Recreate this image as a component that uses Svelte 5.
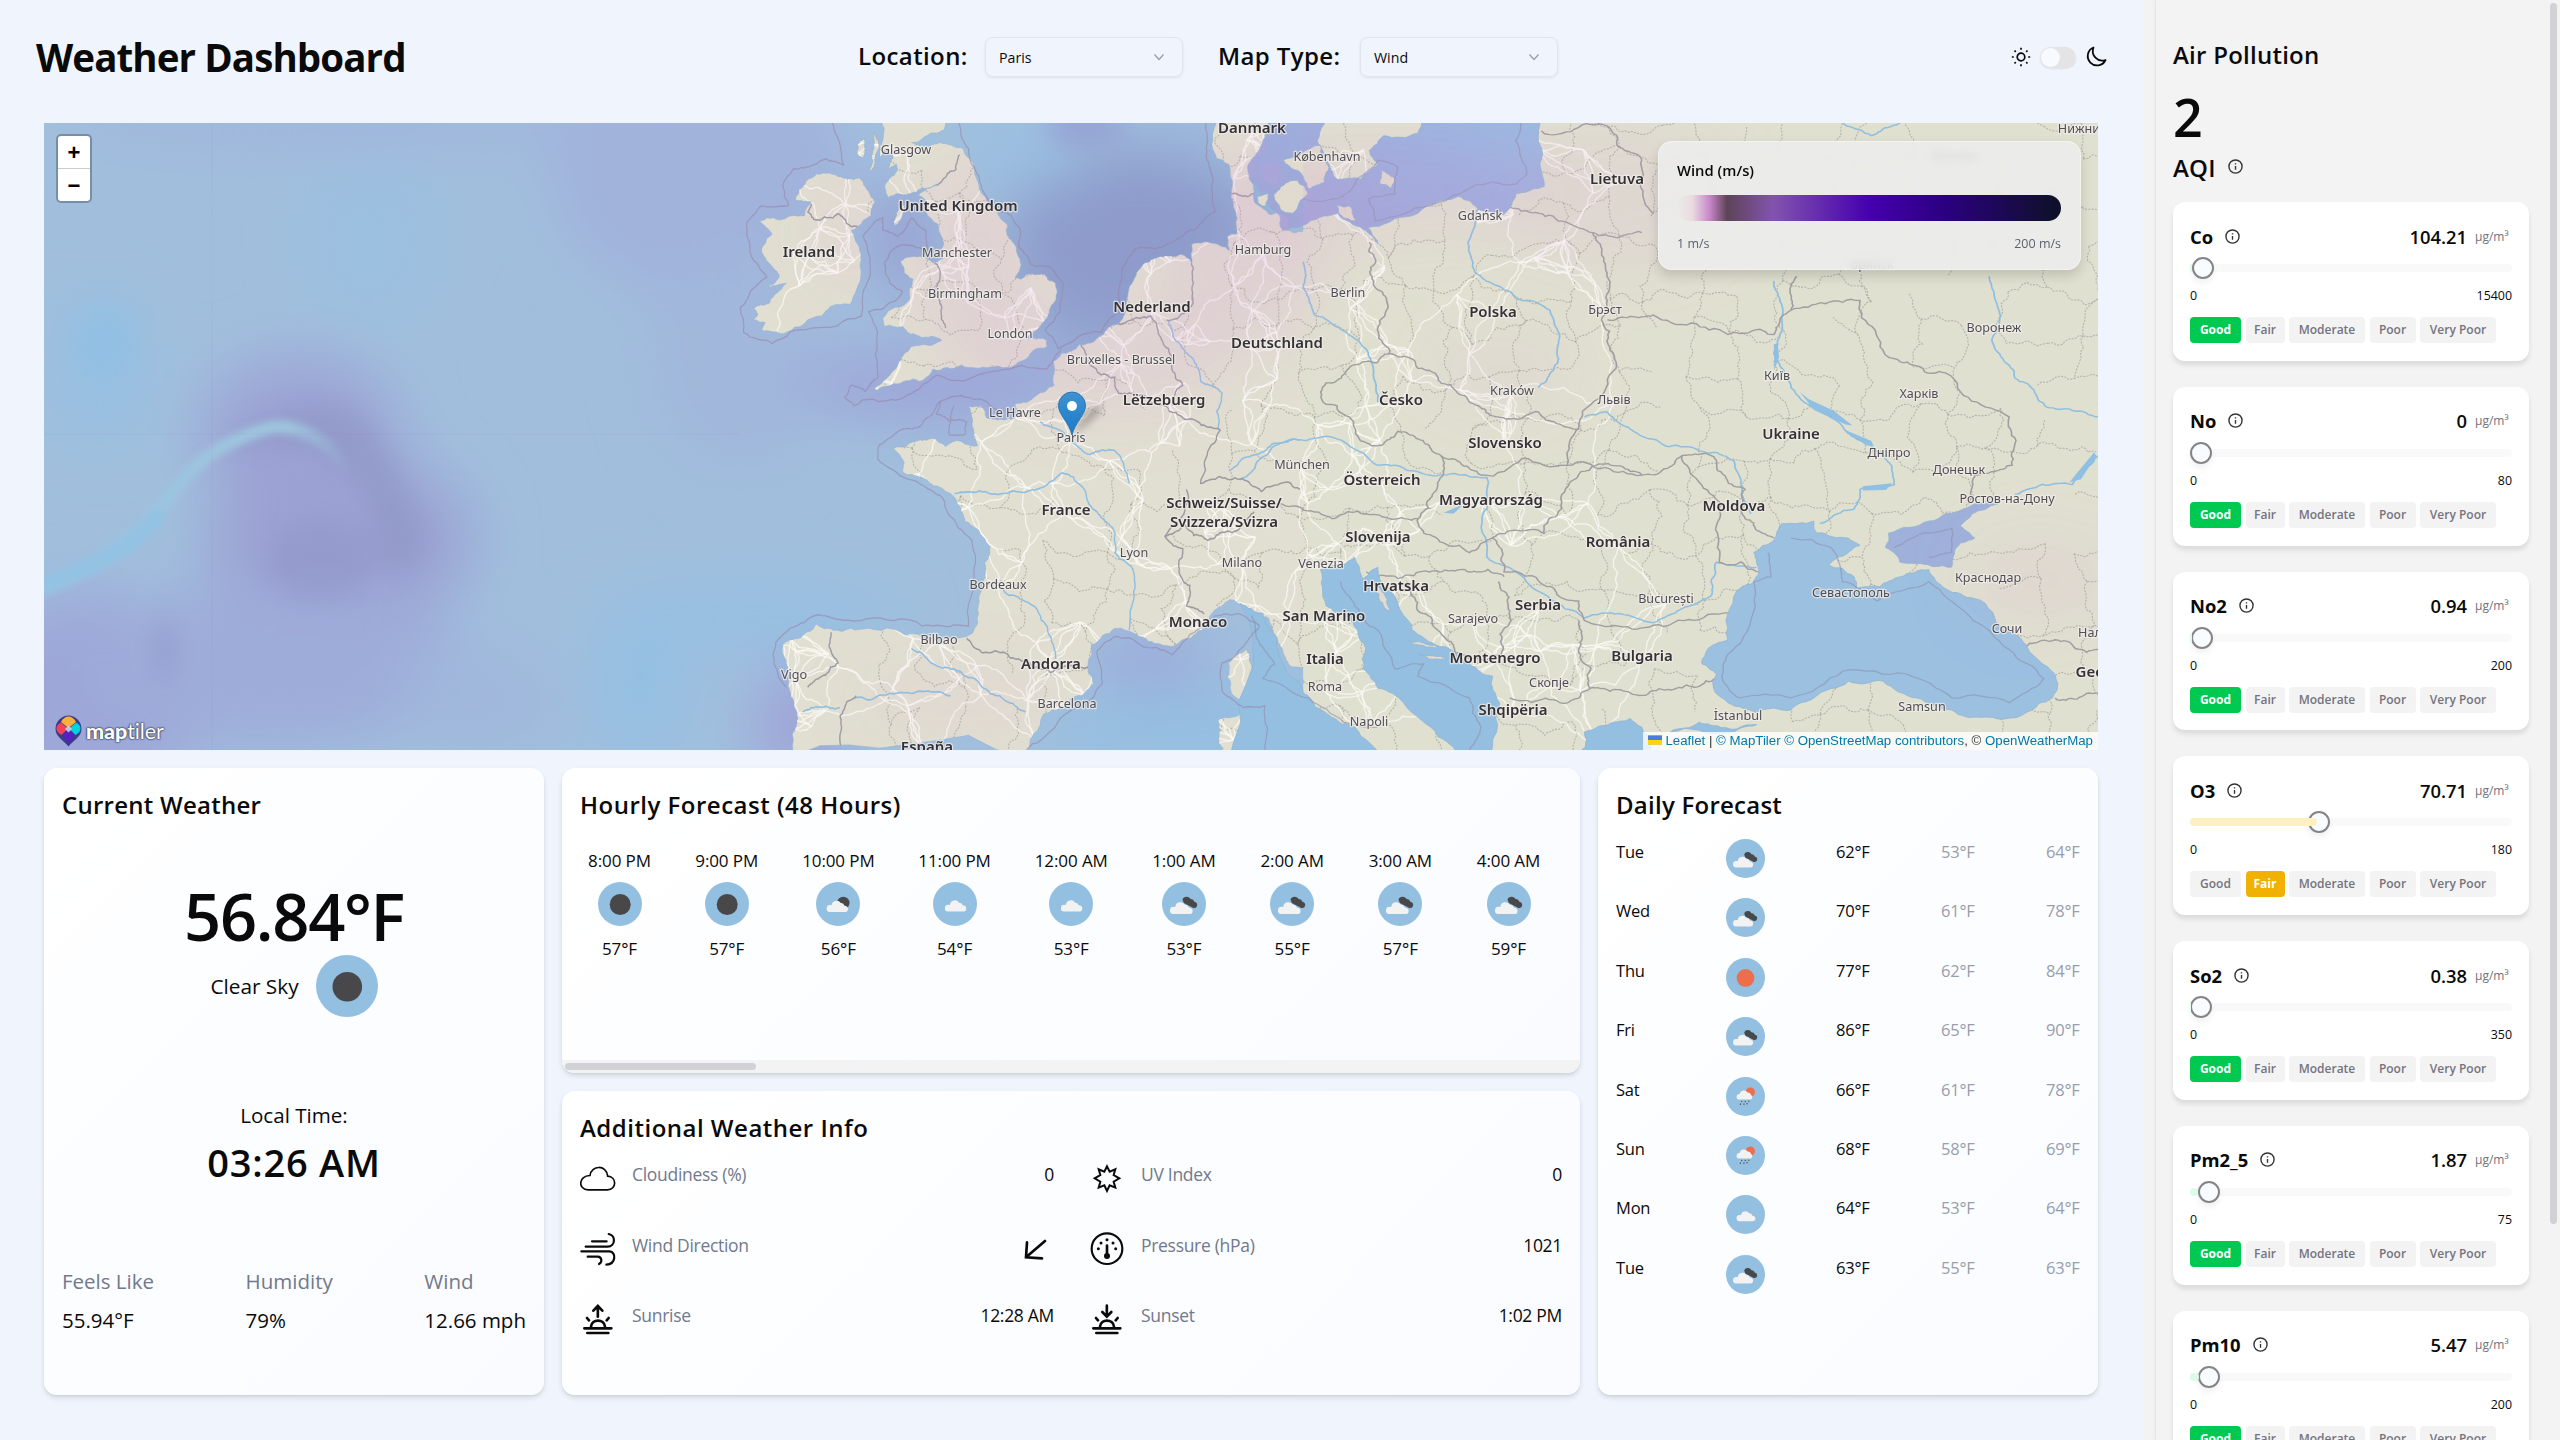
<script>
  const hours = [
    ['8:00 PM', 'clear', '57°F', 62], ['9:00 PM', 'clear', '57°F', 62], ['10:00 PM', 'few', '56°F', 71],
    ['11:00 PM', 'cloud', '54°F', 71], ['12:00 AM', 'cloud', '53°F', 72], ['1:00 AM', 'broken', '53°F', 63],
    ['2:00 AM', 'broken', '55°F', 63], ['3:00 AM', 'broken', '57°F', 63], ['4:00 AM', 'broken', '59°F', 63]
  ];
  const days = [
    ['Tue', 'broken', '62°F', '53°F', '64°F'], ['Wed', 'broken', '70°F', '61°F', '78°F'],
    ['Thu', 'sun', '77°F', '62°F', '84°F'], ['Fri', 'broken', '86°F', '65°F', '90°F'],
    ['Sat', 'rain', '66°F', '61°F', '78°F'], ['Sun', 'rain', '68°F', '58°F', '69°F'],
    ['Mon', 'cloud', '64°F', '53°F', '64°F'], ['Tue', 'broken', '63°F', '55°F', '63°F']
  ];
  const info = [
    ['cloud', 'Cloudiness (%)', '0'], ['uv', 'UV Index', '0'],
    ['wind', 'Wind Direction', ''], ['gauge', 'Pressure (hPa)', '1021'],
    ['sunrise', 'Sunrise', '12:28 AM'], ['sunset', 'Sunset', '1:02 PM']
  ];
  const levels = ['Good', 'Fair', 'Moderate', 'Poor', 'Very Poor'];
  const pollutants = [
    ['Co', '104.21', 15400, 0.68, 0], ['No', '0', 80, 0, 0], ['No2', '0.94', 200, 0.47, 0],
    ['O3', '70.71', 180, 39.3, 1], ['So2', '0.38', 350, 0.11, 0], ['Pm2_5', '1.87', 75, 2.5, 0],
    ['Pm10', '5.47', 200, 2.73, 0]
  ];

  // Deterministic noise for coastlines, roads and borders
  let seed = 7;
  const rnd = () => ((seed = (seed * 16807) % 2147483647) / 2147483647) - 0.5;

  function rough(points, amount = 0.16, depth = 3, closed = false) {
    let p = points.trim().split(/\s+/).map((s) => s.split(',').map(Number));
    if (closed) p.push(p[0]);
    for (let k = 0; k < depth; k++) {
      const q = [p[0]];
      for (let i = 1; i < p.length; i++) {
        const [a, b] = p[i - 1], [c, d] = p[i];
        const len = Math.hypot(c - a, d - b), o = rnd() * len * amount * 2;
        if (len > 6) q.push([(a + c) / 2 - ((d - b) / len) * o, (b + d) / 2 + ((c - a) / len) * o]);
        q.push(p[i]);
      }
      p = q;
    }
    return 'M' + p.map((v) => v[0].toFixed(1) + ' ' + v[1].toFixed(1)).join('L') + (closed ? 'Z' : '');
  }

  const west = [
    '395,0 400,50 392,90 410,70 430,90 415,120 438,108 440,125 405,165 415,190 445,180 520,168 555,158 500,185 530,205 520,225 555,255 570,300 560,320 570,340 540,350 480,335 450,345 460,375 485,390 475,440 400,485 405,505 450,505 490,525 540,530 565,540 480,555 450,590 420,625 370,655 385,662 430,645 500,640 540,610 620,600 700,605 790,590 860,555 858,540 800,535 835,510 860,485 885,440 883,400 850,378 805,378 785,390 770,385 787,355 765,300 745,270 750,260 715,220 670,170 655,110 625,70 560,55 530,65 480,55 520,40 570,25 575,0',
    '155,195 185,150 250,130 300,145 335,142 360,175 378,200 365,235 330,262 312,270 335,320 338,380 310,450 260,455 230,480 130,520 60,515 70,495 38,490 50,475 38,460 80,450 95,430 130,400 80,410 110,380 75,345 60,320 75,290 90,280 55,250 75,240 110,245 180,235 200,200',
    '145,1560 160,1450 140,1400 135,1340 118,1300 125,1280 180,1260 215,1235 260,1250 360,1245 500,1260 620,1268 650,1258 668,1210 680,1130 685,1085 700,1050 670,1005 630,985 610,940 570,905 520,880 455,860 460,840 430,805 500,785 545,780 575,800 665,798 650,750 640,702 675,700 690,730 740,735 790,720 770,695 830,675 880,650 878,590 900,572 950,550 1010,530 1060,500 1080,470 1090,410 1110,375 1160,340 1230,330 1265,350 1265,305 1320,302 1370,320 1365,285 1390,280 1392,240 1375,190 1370,110 1335,95 1335,0 1480,0 1475,70 1440,100 1430,150 1440,200 1480,230 1535,240 1530,270 1600,270 1900,400 1900,1345 1600,1345 1545,1340 1520,1300 1495,1260 1480,1220 1430,1195 1370,1175 1330,1200 1290,1250 1230,1280 1180,1285 1110,1260 1050,1245 985,1285 975,1330 990,1380 930,1415 900,1440 850,1455 800,1560',
    '1420,1295 1430,1330 1432,1380 1412,1425 1375,1400 1368,1330',
    '1340,1470 1410,1445 1440,1470 1448,1560 1355,1560 1340,1520',
    '375,30 388,55 372,120 362,125', '330,60 350,45 345,90 330,85', '440,225 460,205 450,245 432,258',
    '1455,105 1500,98 1518,130 1500,160 1465,145'
  ].map((s) => rough(s, 0.13, 3, true));
  const eastLand = 'M110 240H1520V1570H110Z';
  const seas = [
    '49,230 40,290 20,330 16,370 50,420 75,475 110,465 170,440 200,465 235,490 240,502 222,470 300,445 380,405 415,432 460,442 480,400 510,390 530,385 525,330 522,230 320,240 310,275 250,280 225,310 240,340 210,370 170,370 150,330 135,290 165,230',
    '0,1245 40,1265 65,1320 75,1370 110,1430 160,1480 200,1500 250,1570 -20,1570',
    '140,1175 180,1165 200,1150 215,1195 240,1170 255,1215 300,1300 340,1330 400,1370 440,1395 452,1450 440,1570 390,1570 345,1520 285,1450 240,1420 215,1380 205,1300 150,1250',
    '945,1080 1000,1075 1005,1100 1060,1110 1080,1125 1060,1140 1025,1165 1070,1190 1075,1215 1115,1210 1150,1190 1200,1175 1230,1215 1280,1235 1330,1300 1390,1360 1425,1410 1415,1440 1370,1470 1290,1480 1240,1465 1180,1440 1120,1405 1060,1405 1000,1440 960,1465 900,1470 850,1450 825,1420 830,1390 805,1370 825,1330 850,1320 865,1220 890,1205 905,1180 895,1140 930,1115',
    '1320,1040 1260,1050 1200,1075 1130,1100 1125,1130 1150,1160 1205,1168 1240,1170 1255,1120 1280,1110 1255,1085 1275,1060',
    '750,1510 800,1490 830,1497 900,1495 850,1512', '590,1570 600,1510 650,1490 680,1482 700,1500 720,1570'
  ].map((s) => rough(s, 0.12, 3, true));
  const islands = [
    '165,420 190,425 205,455 180,450', '245,350 268,365 262,388 243,378', '60,400 78,380 100,372 118,400 92,440 70,430', '75,330 140,300 155,345 148,375 120,390 95,350',
    '228,1205 245,1215 262,1260 250,1250', '290,1320 345,1335 320,1332', '310,1350 360,1362 330,1360', '30,405 50,400 45,425 32,420'
  ].map((s) => rough(s, 0.16, 3, true));

  // Maritime limits around the coasts
  const limitsWest = [
    '255,0 290,110 240,95 190,115 150,120 120,160 135,210 60,210 20,250 30,330 75,385 0,460 10,520 90,548 200,510 340,480 345,420 365,360 345,285 400,240 400,270 440,285 480,240 520,270 525,320 440,310 405,350 420,400 455,420 430,445 360,470 385,520 387,630 350,665 310,650 293,680 320,700 345,685 390,690 480,670 550,625 640,635 720,615 860,610 900,560',
    '610,0 640,70 670,140 700,210 760,235 785,270 780,310 815,355 870,360 905,400 895,470 855,515 890,560 1010,520 1060,470 1070,360 1110,315 1210,300 1280,265 1330,225 1325,150 1305,90 1308,0',
    '130,1390 95,1330 100,1280 140,1245 220,1212 300,1225 450,1222 570,1240 640,1240 655,1100 650,1030 580,960 560,920 470,880 385,830 390,795 450,760 510,745 560,690 620,675 690,690 720,710',
    '560,690 550,720 590,740 585,770 630,770 635,740 590,735 600,700',
    '1010,1340 1015,1380 970,1430 880,1490 800,1545', '1010,1340 1000,1300 1050,1265 1120,1285 1210,1310 1260,1260 1330,1215 1400,1210 1455,1240 1410,1290 1350,1330 1350,1400 1410,1440 1470,1435 1470,1545'
  ].map((s) => rough(s, 0.1, 3));
  const limitsEast = [
    '110,410 170,410 200,380 240,330 275,345 270,400 225,410 235,455 330,425 440,375 480,380 500,360 480,290 490,254',
    '175,1200 200,1250 240,1300 270,1380 320,1370 310,1395 400,1440 420,1500 400,1547',
    '920,1140 925,1190 895,1200 885,1300 850,1350 840,1400 870,1440 960,1440 1050,1385 1160,1390 1240,1440 1340,1450 1400,1400 1340,1340 1270,1270 1200,1200 1110,1240 1050,1200 1030,1130 960,1110',
    '1140,1130 1190,1100 1240,1090 1240,1140 1200,1150', '20,1270 35,1330 60,1370 40,1400 120,1440 180,1490 240,1500'
  ].map((s) => rough(s, 0.1, 3));
  const bordersWest = [
    '200,205 190,225 215,245 260,240 275,230 330,262', '615,85 605,120 550,160', '545,350 560,380 545,420 565,460 575,510', '255,1255 275,1330 240,1360 190,1390', '635,1270 700,1305 780,1320 900,1345 975,1340', '955,550 980,600 1050,630 1060,670 1150,690 1200,710', '1200,710 1240,730 1345,760 1290,890 1400,880 1460,910 1568,905', '1060,500 1150,480 1200,560 1240,650 1210,700', '1265,350 1270,400 1250,470 1195,490', '1250,905 1190,1020 1240,1050 1230,1110 1260,1140 1250,1190 1300,1210', '1190,1020 1240,990 1310,1030 1380,1010 1440,960', '325,1410 280,1460 285,1545', '1375,180 1440,180'
  ].map((s) => rough(s, 0.16, 4));
  const bordersEast = [
    '225,500 230,570 255,640 260,730', '260,730 210,750 150,790 145,830 205,900 240,920 275,890 330,920 350,940', '260,730 310,760 350,790 400,830 450,860 520,850 590,885', '590,885 655,760 630,660 640,620 630,520 615,480', '440,440 520,440 615,480 700,480', '640,660 720,650 850,690 930,690 960,640 1080,620 1140,740 1230,770 1340,860 1345,960 1280,980 1270,1040', '350,940 335,1020 310,1070 220,1060 160,1070 60,1040', '350,940 420,980 570,960 590,885', '570,960 700,980 770,940 830,950 880,1010 880,1070 930,1110', '770,940 840,1040 835,1160 905,1180', '700,980 620,960 560,1050 530,1100 440,1110 400,1140 320,1100 310,1070', '440,1110 460,1180 550,1220 590,1240 600,1280 720,1290 860,1260', '590,1280 590,1340 610,1420 570,1450 470,1440', '220,1180 330,1180 400,1180 460,1190', '290,1200 310,1260 360,1320 400,1360 455,1350 470,1270 450,1200', '610,1420 680,1430 760,1420 830,1400', '525,270 640,260 700,330 720,440', '970,570 960,640', '1350,1330 1420,1320 1495,1340', '1420,1440 1495,1430'
  ].map((s) => rough(s, 0.18, 4));
  const rivers = [
    '930,580 945,650 930,730 960,800 1050,880 1100,920 1135,960 1140,1000 1080,1010 1070,1050 1010,1080', '0,990 60,920 150,900 240,960 330,980 430,985 430,1150 480,1180 600,1275 720,1285 820,1230 830,1160 900,1170', '420,420 405,550 450,590 540,640 555,740 520,800', '1305,570 1310,700 1350,780 1405,840 1495,860', '110,540 130,650 220,720 240,830', '600,860 640,850 700,900 800,930 860,950 890,1060', '1495,940 1450,1000 1350,1020', '1050,254 1100,280 1150,254'
  ].map((s) => rough(s, 0.12, 4));
  const riversWest = ['600,915 740,915 830,905 900,865 960,900 1000,960 1050,1010 1050,1060 1100,1100 1090,1250', '840,740 930,790 980,820 1050,810 1090,890', '1370,860 1440,820 1520,790 1568,785', '720,1130 800,1180 860,1240 885,1320', '480,1295 600,1345 700,1405 800,1450', '320,1415 480,1405 590,1410', '1200,490 1240,560 1290,640 1350,670 1340,760', '175,1450 280,1440'].map((s) => rough(s, 0.12, 4));

  const labels = [
    [906, 154, 'Glasgow'], [1252, 133, 'Danmark', 1], [1327, 161, 'København'], [958, 211, 'United Kingdom', 1], [809, 257, 'Ireland', 1],
    [957, 257, 'Manchester'], [1263, 254, 'Hamburg'], [965, 298, 'Birmingham'], [1010, 338, 'London'], [1152, 312, 'Nederland', 1],
    [1121, 364, 'Bruxelles - Brussel'], [1164, 405, 'Lëtzebuerg', 1], [1015, 417, 'Le Havre'], [1071, 442, 'Paris'], [1277, 348, 'Deutschland', 1],
    [1348, 297, 'Berlin'], [1493, 317, 'Polska', 1], [1480, 220, 'Gdańsk'], [1617, 184, 'Lietuva', 1], [1605, 314, 'Брэст'],
    [1401, 405, 'Česko', 1], [1512, 395, 'Kraków'], [1614, 404, 'Львів'], [1505, 448, 'Slovensko', 1], [1302, 469, 'München'],
    [1382, 485, 'Österreich', 1], [1491, 505, 'Magyarország', 1], [1066, 515, 'France', 1], [1224, 508, 'Schweiz/Suisse/', 1], [1224, 527, 'Svizzera/Svizra', 1],
    [1134, 557, 'Lyon'], [1242, 567, 'Milano'], [1321, 568, 'Venezia'], [1378, 542, 'Slovenija', 1], [1618, 547, 'România', 1],
    [998, 589, 'Bordeaux'], [1396, 591, 'Hrvatska', 1], [1666, 603, 'București'], [1538, 610, 'Serbia', 1], [1324, 621, 'San Marino', 1],
    [1473, 623, 'Sarajevo'], [1198, 627, 'Monaco', 1], [939, 644, 'Bilbao'], [1051, 669, 'Andorra', 1], [794, 679, 'Vigo'],
    [1067, 708, 'Barcelona'], [927, 752, 'España', 1], [1325, 664, 'Italia', 1], [1325, 691, 'Roma'], [1369, 726, 'Napoli'],
    [1495, 663, 'Montenegro', 1], [1549, 687, 'Скопје'], [1513, 715, 'Shqipëria', 1], [1642, 661, 'Bulgaria', 1], [1738, 720, 'İstanbul'],
    [1922, 711, 'Samsun'], [1734, 511, 'Moldova', 1], [1777, 380, 'Київ'], [1791, 439, 'Ukraine', 1], [1919, 398, 'Харків'],
    [1889, 457, 'Дніпро'], [1959, 474, 'Донецьк'], [2007, 503, 'Ростов-на-Дону'], [1994, 332, 'Воронеж'], [1988, 582, 'Краснодар'],
    [1851, 597, 'Севастополь'], [2007, 633, 'Сочи'], [2090, 637, 'Нал'], [2090, 677, 'Geo', 1], [2079, 133, 'Нижни'],
    [1954, 160, 'Москва'], [1872, 269, 'Брянск']
  ];

  // Main roads link neighbouring towns; side roads leave them at random
  const towns = labels.filter((l) => l[0] > 740 && l[0] < 1700).map((l) => [l[0], l[1]]);
  for (let i = 0; i < 230; i++) towns.push([770 + (rnd() + 0.5) * 830, 130 + (rnd() + 0.5) * 620]);
  const roads = [];
  for (let i = 0; i < towns.length; i++) {
    const near = towns.map((t, j) => [Math.hypot(t[0] - towns[i][0], t[1] - towns[i][1]), j]).sort((a, b) => a[0] - b[0]).slice(1, 5);
    for (const [d, j] of near) if (j > i || d > 30) roads.push(rough(`${towns[i]} ${towns[j]}`, 0.16, 4));
  }
  // Provincial limits on a jittered lattice
  const regions = [];
  const nodes = [];
  for (let r = 0; r < 16; r++) {
    nodes.push([]);
    for (let c = 0; c < 30; c++) nodes[r].push([880 + c * 43 + rnd() * 28, 116 + r * 43 + rnd() * 28]);
  }
  for (let r = 0; r < 15; r++)
    for (let c = 0; c < 29; c++) {
      if (rnd() > -0.16) regions.push(rough(`${nodes[r][c]} ${nodes[r][c + 1]}`, 0.22, 4));
      if (rnd() > -0.16) regions.push(rough(`${nodes[r][c]} ${nodes[r + 1][c]}`, 0.22, 4));
    }
  const A = 'translate(740 120) scale(.3571 .4082)';
  const B = 'translate(1240 0) scale(.574 .4847)';
</script>

{#snippet weather(kind, size)}
  <svg class="weather" width={size} height={size} viewBox="0 0 44 44">
    <circle cx="22" cy="22" r="22" fill="#93bfe1" />
    {#if kind === 'clear'}
      <circle cx="22.2" cy="22.5" r="10.500" fill="#48484a" />
    {:else if kind === 'sun'}
      <circle cx="22" cy="22.5" r="10" fill="#ec6e4c" />
    {:else if kind === 'rain'}
      <circle cx="27.5" cy="17" r="5.200" fill="#ec6e4c" />
      <path d="M15 25.5a3.2 3.2 0 0 1 .3-6.400 5 5 0 0 1 9-1.700 3.600 3.600 0 0 1 4 3 2.800 2.800 0 0 1-.5 5.100z" fill="#f2f2f2" />
      <path d="M18 27l-.5 1.2M22 27l-.5 1.200M26 26.800l-.5 1.200M16.500 30l-.5 1.200M20.500 30l-.5 1.200M24 29.500l-.5 1.200" stroke="#48484a" stroke-width="1.300" />
    {:else}
      {#if kind === 'few'}<circle cx="27.300" cy="21" r="6.200" fill="#48484a" />{/if}
      {#if kind === 'broken'}
        <path d="M20.500 17.500q1-3 4.500-2.800 2.600.2 3.600 2.400 3-.2 3.800 2.600 3 .6 2.800 3.700-.8 3.200-3.900 2.500l-9.500-5z" fill="#48484a" />
      {/if}
      <path transform={kind === 'broken' ? 'translate(-3.300 .3) scale(1.060)' : kind === 'cloud' ? 'translate(1.300 -.4)' : ''} d="M13.800 30a3.400 3.400 0 0 1 .5-6.900q1 0 1.300.2a5 5 0 0 1 9.200-2.200q2.700-.3 3.700 2.600 3.600.4 3.500 3.500-.3 2.800-3 2.800z" fill="#f2f2f2" />
    {/if}
  </svg>
{/snippet}

{#snippet infoIcon()}
  <svg class="info-icon" viewBox="0 0 24 24" fill="none" stroke="currentColor" stroke-width="2.200"><circle cx="12" cy="12" r="10.500" /><path d="M12 17v-6M12 6.600v2" /></svg>
{/snippet}

{#snippet chevron()}
  <svg width="14" height="14" viewBox="0 0 14 14" fill="none" stroke="#9a9da3" stroke-width="1.300"><path d="M2.500 4.500 7 9.500l4.500-5" /></svg>
{/snippet}

<div class="app">
  <main>
    <header>
      <h1>Weather Dashboard</h1>
      <div class="field"><span class="field-label loc">Location:</span><div class="select">Paris{@render chevron()}</div></div>
      <div class="field"><span class="field-label type">Map Type:</span><div class="select">Wind{@render chevron()}</div></div>
      <div class="theme">
        <svg width="20" height="20" viewBox="0 0 20 20" fill="none" stroke="#0a0a0a" stroke-width="1.700"><circle cx="10" cy="10" r="3.800" /><path d="M10 .8v2M10 17.200v2M.8 10h2M17.200 10h2M3.500 3.500l1.300 1.300M15.200 15.200l1.300 1.300M3.500 16.500l1.300-1.300M15.200 4.800l1.300-1.300" /></svg>
        <span class="toggle"><i></i></span>
        <svg width="22" height="22" viewBox="0 0 22 22" fill="none" stroke="#0a0a0a" stroke-width="1.800" stroke-linejoin="round"><path d="M8.500 1.500A9.300 9.300 0 1 0 20.500 14 9.500 9.500 0 0 1 8.500 1.500Z" /></svg>
      </div>
    </header>

    <section class="map">
      <svg class="canvas" viewBox="44 123 2054 627">
        <defs>
          <filter id="soft" x="-50%" y="-50%" width="200%" height="200%"><feGaussianBlur stdDeviation="30" /></filter>
          <filter id="soft2" x="-50%" y="-50%" width="200%" height="200%"><feGaussianBlur stdDeviation="12" /></filter>
          <filter id="soft3" x="-50%" y="-50%" width="200%" height="200%"><feGaussianBlur stdDeviation="3.500" /></filter>
          <linearGradient id="baltic" x1="0" y1="1" x2="1" y2="0"><stop offset="0" stop-color="#a3a2d4" /><stop offset=".55" stop-color="#9caedd" /><stop offset="1" stop-color="#9bbde2" /></linearGradient>
          <linearGradient id="arc" x1="0" y1="0" x2="1" y2="0"><stop offset="0" stop-color="#97c4e2" /><stop offset=".8" stop-color="#9fc5de" /><stop offset="1" stop-color="#9dc3dd" stop-opacity="0" /></linearGradient>
          <linearGradient id="pin" x1="0" y1="0" x2="0" y2="1"><stop offset="0" stop-color="#3f92cf" /><stop offset="1" stop-color="#1a7acb" /></linearGradient>
          <clipPath id="land">
            {#each west as d}<path {d} transform={A} />{/each}
            <path d={eastLand} transform={B} />
          </clipPath>
        </defs>
        <rect x="44" y="123" width="2054" height="627" fill="#a1bfdd" />
        <g filter="url(#soft)">
          <ellipse cx="100" cy="370" rx="40" ry="70" fill="#94c0e2" />
          <ellipse cx="370" cy="240" rx="60" ry="80" fill="#9bc0e0" />
          <ellipse cx="330" cy="115" rx="270" ry="34" fill="#a0b5dc" />
          <ellipse cx="700" cy="170" rx="150" ry="130" fill="#a1b2db" />
          <ellipse cx="740" cy="360" rx="90" ry="110" fill="#a1b7db" />
          <ellipse cx="300" cy="435" rx="100" ry="80" fill="#9ca3d4" />
          <ellipse cx="340" cy="540" rx="135" ry="90" fill="#9ba2d3" />
          <ellipse cx="90" cy="700" rx="120" ry="110" fill="#9da7d8" />
          <ellipse cx="280" cy="665" rx="190" ry="80" fill="#9eacd9" />
          <ellipse cx="480" cy="700" rx="80" ry="60" fill="#a0b8dc" />
          <ellipse cx="750" cy="618" rx="150" ry="24" fill="#93c0e3" />
          <ellipse cx="640" cy="690" rx="40" ry="70" fill="#93c0e3" />
          <ellipse cx="800" cy="725" rx="45" ry="60" fill="#9fa3d7" />
          <ellipse cx="1120" cy="250" rx="120" ry="105" fill="#8f9dcc" />
          <ellipse cx="1150" cy="225" rx="120" ry="70" fill="#8e9bcb" />
          <ellipse cx="950" cy="385" rx="150" ry="38" fill="#9da5d8" />
          <ellipse cx="905" cy="240" rx="35" ry="60" fill="#979fd2" />
          <ellipse cx="1030" cy="150" rx="60" ry="35" fill="#9ac0e2" />
          <ellipse cx="1190" cy="130" rx="35" ry="30" fill="#9bb8df" />
          <ellipse cx="1150" cy="660" rx="70" ry="24" fill="#9aa6da" />
          <ellipse cx="1230" cy="730" rx="180" ry="34" fill="#92bfe2" />
        </g>
        <g filter="url(#soft2)" opacity=".7">
          <path d="M235 440Q290 395 345 408Q375 420 410 500Q440 540 410 570Q380 590 370 510Q330 425 235 450Z" fill="#8f98c6" />
          <ellipse cx="320" cy="560" rx="55" ry="40" fill="#9299c9" />
          <ellipse cx="165" cy="650" rx="10" ry="35" fill="#9299ca" />
          <ellipse cx="105" cy="340" rx="28" ry="35" fill="#8fc0e4" />
          <ellipse cx="1085" cy="128" rx="40" ry="20" fill="#949bd0" />
        </g>
        <path d="M40 590Q130 553 168 498T273 427Q318 424 350 472" fill="none" stroke="url(#arc)" stroke-width="13" filter="url(#soft3)" />
        <path d="M44 584Q130 556 162 512" fill="none" stroke="#93c2e3" stroke-width="15" filter="url(#soft3)" />
        <path d="M44 434H740M212 123V750" stroke="#9a82c8" stroke-opacity=".1" />

        <g transform={A} fill="#e1dfd1" stroke="#8fb4d2" stroke-width="1.500">{#each west as d}<path {d} />{/each}</g>
        <path d={eastLand} transform={B} fill="#e0e0d0" />
        <g clip-path="url(#land)">
          <g fill="none" stroke="#a7a59e" stroke-width="1.100" stroke-dasharray="2 1.300" stroke-opacity=".75">{#each regions as d}<path {d} />{/each}</g>
          <g fill="none" stroke="#fbfaf6" stroke-width="1.400" stroke-opacity=".75">{#each roads as d}<path {d} />{/each}</g>
          <g transform={A} fill="none" stroke="#8fbfe0" stroke-width="4">{#each riversWest as d}<path {d} />{/each}</g>
          <g transform={B} fill="none" stroke="#8fbfe0" stroke-width="3">{#each rivers as d}<path {d} />{/each}</g>
          <g transform={A} fill="none" stroke="#9c9aa0" stroke-width="3.800">{#each bordersWest as d}<path {d} />{/each}</g>
          <g transform={B} fill="none" stroke="#a09ea0" stroke-width="2.800">{#each bordersEast as d}<path {d} />{/each}</g>
          <g transform={B} fill="#8fbfe2"><path d="M930 710l7-2 2 30-8 25zM975 808l15 15 45 25 32 30-12-2-55-30zM1050 885l50 25 4 10-30-12zM1085 1003l52-6-12 14-40 1zM1445 995l43-62 4 8-27 48zM355 1058l35-18-18 20z" /></g>
        </g>
        <g transform={B} stroke="#8fb4d2" stroke-width="1.500">
          {#each seas as d, i}<path {d} fill={i === 0 ? 'url(#baltic)' : i === 4 ? '#9fb1db' : i === 3 ? '#9bc0e0' : '#95bfe1'} />{/each}
          {#each islands as d}<path {d} fill="#e1dace" />{/each}
        </g>
        <g transform={A} fill="none" stroke="#9784a6" stroke-opacity=".6" stroke-width="3.200">{#each limitsWest as d}<path {d} />{/each}</g>
        <g transform={B} fill="none" stroke="#8f8fae" stroke-opacity=".6" stroke-width="2.400">{#each limitsEast as d}<path {d} />{/each}</g>
        <g clip-path="url(#land)"><g filter="url(#soft)" fill="#d89ad8">
          <ellipse cx="1240" cy="260" rx="90" ry="90" opacity=".2" />
          <ellipse cx="1110" cy="360" rx="120" ry="55" opacity=".19" />
          <ellipse cx="980" cy="270" rx="65" ry="110" opacity=".19" />
          <ellipse cx="850" cy="230" rx="50" ry="70" opacity=".1" />
          <ellipse cx="1370" cy="190" rx="200" ry="60" opacity=".13" />
          <ellipse cx="1620" cy="200" rx="120" ry="75" opacity=".12" />
          <ellipse cx="2040" cy="580" rx="80" ry="45" opacity=".12" />
          <ellipse cx="1500" cy="370" rx="80" ry="40" opacity=".1" />
          <ellipse cx="960" cy="700" rx="110" ry="35" opacity=".1" />
        </g></g>

        <g class="labels">
          {#each labels as [x, y, t, country]}
            <text {x} {y} class:country>{t}</text>
          {/each}
        </g>
        <path d="M1074 432l12-20q10-9 15-5 3 6-24 25z" fill="#333" opacity=".3" filter="url(#soft3)" />
        <path d="M1072 435c-3-13-13.500-20-13.500-29.500a13.500 13.500 0 0 1 27 0c0 9.500-10.500 16.500-13.500 29.500z" fill="url(#pin)" stroke="#2b77b4" stroke-width="1" />
        <circle cx="1072" cy="406" r="5" fill="#fff" />
      </svg>

      <div class="zoomer"><span>+</span><span>−</span></div>
      <div class="maptiler">
        <svg width="27" height="32" viewBox="0 0 27 32">
          <path d="M13.500.5C20 .5 26.500 6 26.500 14c0 8-8 11-13 17.500C8.500 25 .5 22 .5 14 .5 6 7 .5 13.500.5z" fill="#3c3c8a" />
          <path d="M13.500 1.500q4.500 0 7.500 5.500l-7.500 6-7.500-6q3-5.500 7.500-5.500z" fill="#fbb03b" /><path d="M6 7.500l7 6-6.500 6.500q-5-3-5-6.500t4.500-6z" fill="#f0435a" /><path d="M21 7.500q4.500 2.500 4.500 6t-5 6.500l-6.500-6.500z" fill="#05d0df" /><path d="M13.500 14l6.500 6.500q-4 3-6.500 9-2.500-6-6.500-9z" fill="#5521c0" /><path d="M13.500 10.500l3.500 3.500-3.500 3.500-3.500-3.500z" fill="#cfd6ee" opacity=".85" />
        </svg>
        <span><b>map</b>tiler</span>
      </div>
      <div class="legend">
        <strong>Wind (m/s)</strong>
        <div class="ramp"></div>
        <div class="ends"><span>1 m/s</span><span>200 m/s</span></div>
      </div>
      <div class="credit">
        <svg width="14" height="10" viewBox="0 0 12 8"><path fill="#4c7be1" d="M0 0h12v4H0z" /><path fill="#ffd500" d="M0 4h12v3H0z" /><path fill="#e0bc00" d="M0 7h12v1H0z" /></svg>
        <a>Leaflet</a> | <a>© MapTiler</a> <a>© OpenStreetMap contributors</a>, © <a>OpenWeatherMap</a>
      </div>
    </section>

    <div class="cards">
      <section class="card current">
        <h2>Current Weather</h2>
        <div class="temp">56.84°F</div>
        <div class="sky"><span>Clear Sky</span>{@render weather('clear', 62)}</div>
        <div class="local">Local Time:</div>
        <div class="clock">03:26 AM</div>
        <div class="stats">
          <div><span>Feels Like</span><b>55.94°F</b></div>
          <div><span>Humidity</span><b>79%</b></div>
          <div><span>Wind</span><b>12.66 mph</b></div>
        </div>
      </section>

      <div class="middle">
        <section class="card hourly">
          <h2 class="wide">Hourly Forecast (48 Hours)</h2>
          <div class="hours">
            {#each hours as [time, kind, temp, width]}
              <div class="hour" style:width="{width}px"><span>{time}</span>{@render weather(kind, 44)}<span>{temp}</span></div>
            {/each}
          </div>
          <div class="hscroll"><i></i></div>
        </section>
        <section class="card extra">
          <h2 class="wide">Additional Weather Info</h2>
          <div class="facts">
            {#each info as [icon, label, value]}
              <div class="fact">
                {#if icon === 'cloud'}
                  <svg viewBox="29 33 108 108" stroke-width="5"><path d="M53 119.500h58c29-1 29-39 1-41-3-36-50-33-53-2-36 1-36 42-6 43z" /></svg>
                {:else if icon === 'uv'}
                  <svg viewBox="236 33 108 108" stroke-width="6" stroke-linejoin="miter"><path d="M290 49l8 16 17-7-5 17 17 10-17 10 5 18-17-7-8 17-8-17-17 7 5-18-17-10 17-10-5-17 17 7z" /></svg>
                {:else if icon === 'wind'}
                  <svg viewBox="29 244 108 108" stroke-width="6.500"><path d="M65 272h44M46 288h66c24-1 25-34 3-38M33 302h85c20 2 20 38-10 40M52 318h30c14 1 14 17 4 22" /></svg>
                {:else if icon === 'gauge'}
                  <svg viewBox="236 245 108 108" stroke-width="6.500"><circle cx="290" cy="295" r="46" /><path d="M290 286v28" stroke-width="8" /><g fill="#0a0a0a" stroke="none"><circle cx="290" cy="317" r="9" /><circle cx="264" cy="295" r="4.500" /><circle cx="272" cy="278" r="4.500" /><circle cx="290" cy="268" r="4.500" /><circle cx="308" cy="278" r="4.500" /><circle cx="316" cy="295" r="4.500" /></g></svg>
                {:else}
                  <svg viewBox="29 456 108 108" stroke-width="8"><path d="M42 535h81M51 549h63M62 530c2-24 40-24 42 0M50 504l6 7M115 504l-6 7" /><path d={icon === 'sunrise' ? 'M82.500 500v-31M69 482l13.500-14 13.500 14' : 'M82.500 467v31M69 486l13.500 14 13.500-14'} /></svg>
                {/if}
                <span class="name">{label}</span>
                {#if value}<span class="value">{value}</span>{:else}
                  <svg class="arrow" viewBox="39 263 75 70" stroke-width="8"><path d="M105 271l-57 49M51 275l-3 45 48 3" /></svg>
                {/if}
              </div>
            {/each}
          </div>
        </section>
      </div>

      <section class="card daily">
        <h2>Daily Forecast</h2>
        <div class="days">
          {#each days as [day, kind, now, low, high]}
            <div class="day"><span>{day}</span>{@render weather(kind, 39)}<span>{now}</span><span class="dim">{low}</span><span class="dim">{high}</span></div>
          {/each}
        </div>
      </section>
    </div>
  </main>

  <aside>
    <div class="panel">
      <h2>Air Pollution</h2>
      <div class="aqi">2</div>
      <div class="aqi-label">AQI {@render infoIcon()}</div>
      {#each pollutants as [name, value, max, pct, level]}
        <section class="pollutant">
          <div class="head"><b>{name}</b>{@render infoIcon()}<strong>{value}</strong><small>μg/m³</small></div>
          <div class="slider">
            <div class="track"></div>
            <div class="thumb" style:left="{pct * 3}px"></div>
            <div class="fill" class:fair={level === 1} style:width="{pct}%"></div>
          </div>
          <div class="scale"><span>0</span><span>{max}</span></div>
          <div class="badges">
            {#each levels as l, i}<span class:good={i === level && i === 0} class:fairly={i === level && i === 1}>{l}</span>{/each}
          </div>
        </section>
      {/each}
    </div>
    <div class="vscroll"><i></i></div>
  </aside>
</div>

<style>
  :global(body) { background: #f0f5fd; overflow: hidden; }
  * { box-sizing: border-box; margin: 0; }
  .app { display: flex; width: 2560px; height: 1440px; overflow: hidden; background: #f0f5fd; color: #0a0a0a; font-family: 'Open Sans', 'Noto Sans', sans-serif; font-size: 16px; }
  main { width: 2143px; flex: none; }
  header { height: 114px; padding: 0 36px 0 36px; display: flex; align-items: center; }
  h1 { width: 822px; font-size: 38.500px; font-weight: 700; letter-spacing: -.9px; white-space: nowrap; }
  h2 { font-size: 24px; font-weight: 600; line-height: 37px; height: 36px; letter-spacing: .25px; white-space: nowrap; }
  h2.wide { letter-spacing: .5px; }
  .field { display: flex; align-items: center; margin-right: 35px; }
  .field-label { font-size: 24px; font-weight: 600; white-space: nowrap; letter-spacing: .4px; line-height: 32px; padding-bottom: 2px; }
  .loc { width: 127px; }
  .type { width: 142px; }
  .select { width: 198px; height: 40px; border: 1px solid #e1e6ec; border-radius: 8px; box-shadow: 0 1px 3px rgba(0, 0, 0, .08); padding: 0 16px 0 13px; display: flex; align-items: center; justify-content: space-between; font-size: 14.200px; }
  .theme { margin-left: auto; display: flex; align-items: center; gap: 9px; }
  .toggle { width: 36px; height: 21px; border-radius: 11px; background: #e4e4e7; padding: 1px; box-shadow: 0 1px 2px rgba(0, 0, 0, .08); }
  .toggle i { display: block; width: 19px; height: 19px; border-radius: 50%; background: #f7faff; }

  .map { position: relative; width: 2054px; height: 627px; margin: 9px 0 0 44px; overflow: hidden; }
  .canvas { display: block; width: 2054px; height: 627px; }
  .labels text { font-family: 'Noto Sans', sans-serif; font-size: 12.6px; fill: #504e55; text-anchor: middle; stroke: #f0eeea; stroke-width: 2.500px; stroke-opacity: .75; paint-order: stroke; stroke-linejoin: round; }
  .labels text.country { font-size: 15px; font-weight: 600; fill: #343236; }
  .zoomer { position: absolute; left: 12px; top: 11px; width: 36px; border: 2px solid rgba(0, 0, 0, .25); border-radius: 5px; background-clip: padding-box; background-color: #fff; font: bold 22px/33px 'Liberation Sans', sans-serif; text-align: center; color: #000; }
  .zoomer span { display: block; height: 32px; }
  .zoomer span + span { border-top: 1px solid #ccc; height: 33px; }
  .maptiler { position: absolute; left: 11px; top: 592px; display: flex; align-items: center; gap: 4px; color: #fff; font: 21.500px/30px Lato, sans-serif; letter-spacing: -.1px; text-shadow: 0 0 2px #333a55, 0 0 2px #333a55, 0 0 1px #333a55; }
  .maptiler b { font-weight: 900; }
  .legend { position: absolute; left: 1614px; top: 18px; width: 423px; height: 129px; padding: 18px 19px 19px 18px; border-radius: 14px; background: rgba(238, 240, 240, .78); backdrop-filter: blur(4px); box-shadow: 0 6px 12px rgba(0, 0, 0, .14); border: 1px solid rgba(255, 255, 255, .4); }
  .legend strong { display: block; font-size: 14.800px; line-height: 20px; font-weight: 600; }
  .ramp { height: 26px; margin-top: 15px; border-radius: 13px; background: linear-gradient(90deg, rgba(255, 255, 255, 0) 0%, #eadbe0 4%, #c887c9 8.500%, #5d4458 13%, #8254ae 25%, #4600af 50%, #2b0080 70%, #0d1126 100%); }
  .ends { display: flex; justify-content: space-between; margin-top: 14px; font-size: 12.500px; line-height: 18px; color: #5a6272; }
  .credit { position: absolute; right: 0; bottom: 0; height: 18px; padding: 0 5px; background: rgba(255, 255, 255, .8); font: 13.250px/18px 'Liberation Sans', sans-serif; color: #333; white-space: nowrap; }
  .credit a { color: #0078a8; }

  .cards { display: flex; gap: 18px; margin: 18px 0 0 44px; height: 627px; }
  .card { background: linear-gradient(135deg, #fff, #f9fbff); border-radius: 13px; box-shadow: 0 3px 5px rgba(20, 30, 50, .13), 0 1px 2px rgba(20, 30, 50, .06); padding: 18px; }
  .current { width: 500px; display: flex; flex-direction: column; }
  .current > div { text-align: center; }
  .temp { margin-top: 61px; font-size: 65px; line-height: 66px; font-weight: 600; letter-spacing: -1.300px; }
  .sky { margin-top: 6px; display: flex; align-items: center; justify-content: center; gap: 17px; font-size: 20.800px; }
  .weather { display: block; flex: none; }
  .local { margin-top: 84px; font-size: 20.600px; line-height: 28px; }
  .clock { margin-top: 8px; font-size: 38px; line-height: 50px; font-weight: 600; letter-spacing: .8px; }
  .stats { margin-top: 80px; display: flex; justify-content: space-between; font-size: 20.500px; line-height: 28px; }
  .stats div { display: flex; flex-direction: column; gap: 11px; align-items: flex-start; }
  .stats span { color: #71798c; }
  .stats b { font-weight: 400; }
  .middle { width: 1018px; display: flex; flex-direction: column; gap: 18px; }
  .hourly { height: 305px; display: flex; flex-direction: column; overflow: hidden; padding: 18px 0 0; }
  .hourly h2 { padding-left: 18px; }
  .hours { display: flex; gap: 45.200px; padding: 27px 0 0 26.500px; }
  .hour { display: flex; flex-direction: column; align-items: center; line-height: 24px; white-space: nowrap; font-size: 17px; letter-spacing: -.1px; }
  .hour .weather { margin: 9px 0 11px; }
  .hscroll { margin-top: auto; height: 13px; background: #f3f3f3; padding: 3px; }
  .hscroll i { display: block; width: 191px; height: 7px; border-radius: 4px; background: #d1d1d6; }
  .extra { height: 304px; }
  .facts { margin-top: 16px; display: grid; grid-template-columns: 474px 473px; column-gap: 35px; row-gap: 34.500px; }
  .fact { display: flex; height: 36px; line-height: 26px; font-size: 17.500px; letter-spacing: -.3px; }
  .fact svg { width: 36px; height: 36px; flex: none; fill: none; stroke: #0a0a0a; stroke-linecap: round; }
  .fact .name { margin-left: 16px; color: #71798c; }
  .fact .value { margin-left: auto; }
  .fact .arrow { width: 25px; height: 24px; margin: 6px 6px 0 auto; }
  .daily { width: 500px; }
  .days { margin-top: 17px; display: grid; row-gap: 20.400px; }
  .day { display: grid; grid-template-columns: 110px 110px 105px 105px auto; height: 39px; line-height: 26px; font-size: 16.500px; letter-spacing: -.2px; }
  .dim { color: #989eac; }

  aside { width: 417px; height: 1440px; flex: none; display: flex; justify-content: space-between; background: #f3f3f4; padding-left: 12px; }
  .panel { width: 390px; padding: 36px 0 0 17px; border-left: 1px solid #e6e6e8; box-shadow: -2px 0 3px rgba(0, 0, 0, .02); height: 1440px; overflow: hidden; }
  .aqi { margin-top: 18px; font-size: 52px; line-height: 54px; font-weight: 600; }
  .aqi-label { margin: 8px 0 18px; display: flex; align-items: center; gap: 12px; font-size: 24px; line-height: 32px; font-weight: 600; letter-spacing: .2px; }
  .aqi-label .info-icon { margin-bottom: 3px; }
  .info-icon { width: 15px; height: 15px; color: #333; }
  .pollutant { width: 356px; height: 158.800px; margin-bottom: 26px; padding: 20px 17px 0; background: #fff; border-radius: 12px; box-shadow: 0 4px 5px rgba(0, 0, 0, .1); }
  .head { display: flex; align-items: center; height: 28px; font-size: 18.400px; }
  .head b { font-weight: 700; margin-right: 12px; }
  .head strong { margin-left: auto; font-weight: 600; }
  .head small { margin-left: 8px; width: 37px; font-size: 12px; color: #71717b; white-space: nowrap; }
  .slider { position: relative; height: 22px; margin-top: 7px; padding-top: 7px; }
  .track { height: 8px; border-radius: 4px; background: #f9f9f9; }
  .thumb { position: absolute; top: 0; width: 22px; height: 22px; border: 2px solid #858587; border-radius: 50%; background: #f8fbff; box-shadow: 0 4px 6px rgba(0, 0, 0, .06); }
  .fill { position: absolute; left: 0; top: 7px; height: 8px; border-radius: 4px; background: #dcfce7; }
  .fill.fair { background: #fef0bf; }
  .scale { display: flex; justify-content: space-between; margin-top: 8px; font-size: 12.400px; line-height: 18px; }
  .badges { display: grid; grid-template-columns: 51px 39px 76px 46px 76px; gap: 4.500px; margin-top: 12px; }
  .badges span { height: 26px; border-radius: 4px; background: #f3f3f4; color: #74747e; font-size: 12px; line-height: 26px; font-weight: 600; text-align: center; white-space: nowrap; }
  .badges .good { background: #00c951; color: #fff; font-weight: 700; }
  .badges .fairly { background: #f0b100; color: #fff; font-weight: 700; }
  .vscroll { width: 10px; padding-top: 3px; }
  .vscroll i { display: block; width: 7px; height: 1221px; border-radius: 4px; background: #d1d1d6; }
</style>
